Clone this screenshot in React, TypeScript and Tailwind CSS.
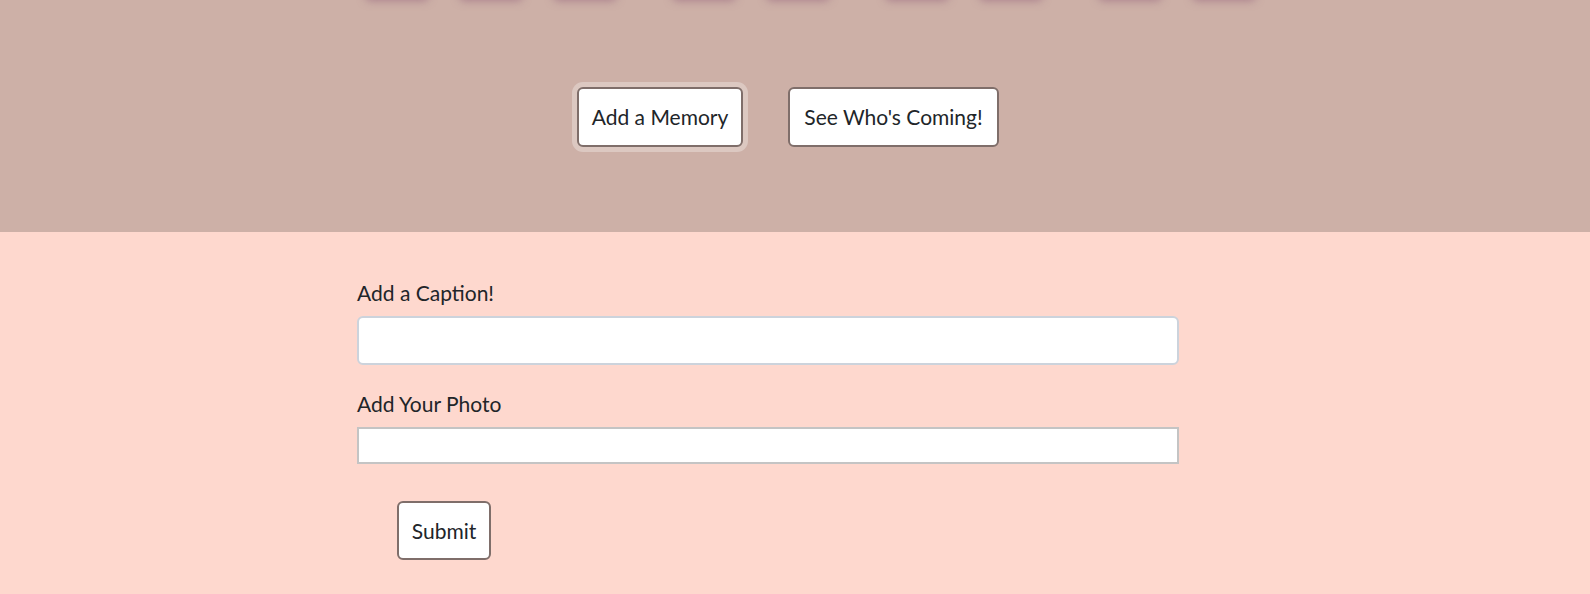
import React from 'react'

const groups = [3, 2, 2, 2]

export default function App() {
  return (
    <div className="min-h-[594px] font-['Lato','Liberation_Sans',sans-serif] text-[#212529]">
      {/* Countdown strip + action buttons */}
      <section className="h-[232px] bg-[#cdb0a7] overflow-hidden">
        <div className="flex gap-[55px] pl-[365px] -mt-[71px] h-[70px]">
          {groups.map((n, g) => (
            <div key={g} className="flex gap-[30px]">
              {Array.from({ length: n }).map((_, i) => (
                <div
                  key={i}
                  className="w-[64px] h-[70px] rounded-md bg-[#cdb0a7] shadow-[0_2px_8px_rgba(150,100,125,0.6)]"
                />
              ))}
            </div>
          ))}
        </div>

        <div className="flex gap-[45px] pl-[577px] mt-[88px]">
          <button className="w-[166px] h-[60px] bg-white border-2 border-[#7f6e6a] rounded-[6px] text-[21px] shadow-[0_0_0_5px_rgba(255,255,255,0.3)]">
            Add a Memory
          </button>
          <button className="w-[211px] h-[60px] bg-white border-2 border-[#7f6e6a] rounded-[6px] text-[21px]">
            See Who's Coming!
          </button>
        </div>
      </section>

      {/* Memory form */}
      <section className="h-[362px] bg-[#fed8ce]">
        <form className="w-[822px] ml-[357px] pt-[45px]" onSubmit={(e) => e.preventDefault()}>
          <label className="block text-[21px] leading-[31px]">Add a Caption!</label>
          <input
            type="text"
            className="block w-full h-[49px] mt-[8px] bg-white border-2 border-[#ccd3dc] rounded-[6px] px-3 text-[20px] outline-none"
          />
          <label className="block text-[21px] leading-[31px] mt-[23px]">Add Your Photo</label>
          <input
            type="text"
            className="block w-full h-[37px] mt-[8px] bg-white border-2 border-[#c4c4c4] px-2 outline-none"
          />
          <button
            type="submit"
            className="block w-[94px] h-[59px] mt-[37px] ml-[40px] bg-white border-2 border-[#7f6e6a] rounded-[6px] text-[21px]"
          >
            Submit
          </button>
        </form>
      </section>
    </div>
  )
}
